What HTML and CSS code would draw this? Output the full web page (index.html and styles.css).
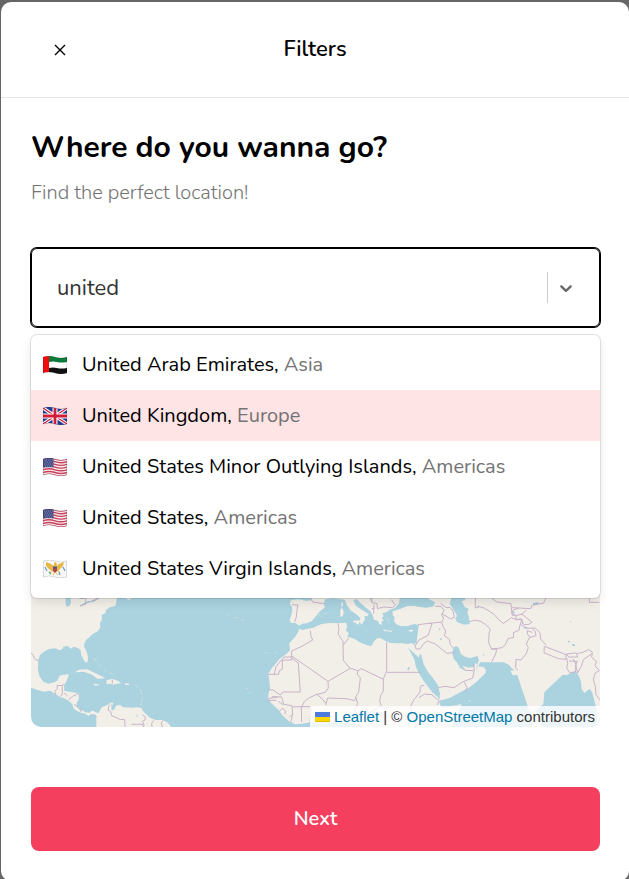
FILE: index.html
```html
<!DOCTYPE html>
<html lang="en">
<head>
<meta charset="utf-8">
<meta name="viewport" content="width=device-width, initial-scale=1">
<title>Filters</title>
<link rel="stylesheet" href="styles.css">
</head>
<body>
<main class="modal" role="dialog" aria-labelledby="modal-title">
  <header class="modal-header">
    <button class="close" type="button" aria-label="Close">
      <svg width="18" height="18" viewBox="0 0 18 18" aria-hidden="true"><path d="M4 4l10 10M14 4L4 14"/></svg>
    </button>
    <h1 class="modal-title" id="modal-title">Filters</h1>
  </header>
  <div class="modal-body">
    <h2 class="heading">Where do you wanna go?</h2>
    <label class="subtitle" for="country">Find the perfect location!</label>
    <div class="select">
      <div class="control">
        <input class="search" id="country" type="text" value="united" role="combobox" aria-expanded="true" aria-controls="countries" autocomplete="off">
        <span class="separator"></span>
        <button class="toggle" type="button" aria-label="Toggle countries">
          <svg width="20" height="20" viewBox="0 0 20 20" aria-hidden="true"><path d="M4.516 7.548c0.436-0.446 1.043-0.481 1.576 0l3.908 3.747 3.908-3.747c0.533-0.481 1.141-0.446 1.574 0 0.436 0.445 0.408 1.197 0 1.615-0.406 0.418-4.695 4.502-4.695 4.502-0.217 0.223-0.502 0.335-0.787 0.335s-0.57-0.112-0.789-0.335c0 0-4.287-4.084-4.695-4.502s-0.436-1.17 0-1.615z"/></svg>
        </button>
      </div>
      <ul class="menu" id="countries" role="listbox">
        <li class="option" role="option">
          <svg class="flag" viewBox="0 0 24 18" aria-hidden="true"><g clip-path="url(#wave)"><path fill="#fff" d="M0 0h24v18H0z"/><path fill="#087a3c" d="M6 0V6Q10 5 14 6T24 6V0z"/><path fill="#111" d="M6 12Q10 11 14 12T24 12V18H6z"/><path fill="#f20d0d" d="M0 0h6v18H0z"/></g><use href="#flag-edge"/></svg>
          <span>United Arab Emirates, <span class="region">Asia</span></span>
        </li>
        <li class="option active" role="option" aria-selected="true">
          <svg class="flag" viewBox="0 0 24 18" aria-hidden="true"><g clip-path="url(#wave)"><path fill="#1d3f91" d="M0 0h24v18H0z"/><path stroke="#fff" stroke-width="3.4" d="M0 1l24 16M24 1L0 17"/><path stroke="#d21c3b" stroke-width="1.3" d="M0 1l24 16M24 1L0 17"/><path stroke="#fff" stroke-width="5" d="M12 0v18M0 9h24"/><path stroke="#d21c3b" stroke-width="2.8" d="M12 0v18M0 9h24"/></g><use href="#flag-edge"/></svg>
          <span>United Kingdom, <span class="region">Europe</span></span>
        </li>
        <li class="option" role="option">
          <svg class="flag" viewBox="0 0 24 18" aria-hidden="true"><use href="#flag-us"/></svg>
          <span>United States Minor Outlying Islands, <span class="region">Americas</span></span>
        </li>
        <li class="option" role="option">
          <svg class="flag" viewBox="0 0 24 18" aria-hidden="true"><use href="#flag-us"/></svg>
          <span>United States, <span class="region">Americas</span></span>
        </li>
        <li class="option" role="option">
          <svg class="flag" viewBox="0 0 24 18" aria-hidden="true"><g clip-path="url(#wave)"><path fill="#f7f7f7" d="M0 0h24v18H0z"/><path fill="#e9b545" d="M3 2l5 2 3 2 0-3 1.500-1L14 4l-.5 2L16 4l5-2-1 4-3 3-2 2-3 2-3-2-3-2-3-3z"/><path stroke="#e9b545" stroke-width="1" d="M9 10l-2 3M15 10l2 3M11 13l-1 2M13 13l2 2"/><path fill="#b04456" d="M10 7.500h4v3L12 13l-2-2.500z"/><path fill="#4c5790" d="M10 6.500h4v2h-4z"/><path stroke="#5a9cc4" stroke-width="1.200" d="M2 7l2 4M20 7l2 4M16 12l1 3"/><path stroke="#67a36c" stroke-width="1.200" d="M6 12l2 2"/></g><use href="#flag-edge"/></svg>
          <span>United States Virgin Islands, <span class="region">Americas</span></span>
        </li>
      </ul>
    </div>
    <div class="map">
      <svg class="tiles" viewBox="33 -513 1707 924" preserveAspectRatio="xMidYMax slice" role="img" aria-label="World map">
        <!-- Americas -->
        <g>
          <path class="land" d="M33-513H290V30L286 48 270 52 258 60 256 70 245 75 246 90 240 98 241 113 233 124 218 132 208 142 198 150 193 160 192 168 200 185 204 200 203 215 197 218 190 208 183 193 182 180 173 174 162 170 152 176 143 168 130 170 128 176 120 181 105 175 88 177 75 183 60 195 55 210 54 240 58 258 70 275 85 281 103 277 113 271 118 258 130 254 147 253 143 265 137 278 132 285 133 303 150 305 175 310 177 325 170 340 170 350 178 359 190 362 195 367 210 368 217 361 227 367 235 370 245 352 260 346 275 337 280 340 276 354 282 361 288 347 300 345 310 352 335 353 352 352 365 354 368 362 378 372 390 383 407 390 427 390 440 396 447 402 453 411H229V378L222 373 212 373 205 378 196 371 184 369 170 362 161 356 157 343 148 334 132 325 118 320 106 312 90 302 73 305 55 301 33 293z"/>
          <path class="land" d="M165 247l12-8 25-1 23 11 14 7 17 9-24 1-16-12-24-9zM260 270l18-3 15 5 11 8-19 2-7 4-5-5-14 1zM315 280l13 1v4h-13zM220 281l15 2 2 3-12 1zM318 24l18 0-10 6z"/>
          <path class="islets" d="M219 206l8 2 2 9M235 224l7 8M252 237l8 8M268 250l12 3M346 286l8 5M360 297l4 10 1 8M367 321l-2 15-3 12M383 328l1 1"/>
          <path class="water" d="M137 20h14l2 18-5 10-8 2-3-8zM274 340l6 8-1 13-5-2zM349 373l5 4-3 5z"/>
          <path class="lake" d="M180 24l12 0M180 48l20-10 12-4M216 36l21-12"/>
          <path class="border" d="M33 189l7 7 3 9 8 6h8M131 281l-4 6-16-1 1 10-8 8 4 11M127 287v25l-6 8M132 309l10 8M146 329l12-10 17-9M162 344l10 4M184 357l-2 9M223 373l6 8M177 24l20 0 1 18-18 6M210 35l28-12M277 269v14M268 344l-4 16 8 5 3 12 14 6 13 6 12-1 1 23M370 411l-1-8H334M367 374l9 7-1 9-8 4 6 12M401 391l-6 9 1 11M430 391l-7 8 5 12"/>
        </g>
        <!-- Europe and Africa -->
        <g transform="translate(570)">
          <path class="land" d="M300-513H570V20L567 40 555 54 540 59 530 66 517 70 521 78 515 85 522 92 514 94 517 105 507 101 503 92 492 89 487 73 478 61 468 53 455 42 440 27 430 31 438 48 460 62 476 72 472 79 463 77 465 88 455 104 449 97 451 84 438 72 423 62 409 43 405 29 370 25 345 28 341 43 345 52 327 67 315 82 305 94 290 100 276 101 268 107 255 98 243 99 239 91 247 63 246 51 240 43 242 31 265 28 290 33 306 30z"/>
          <path class="land" d="M268 116L277 120 310 113 332 103 357 99 386 100 408 98 412 110 407 120 416 130 412 140 430 145 452 158 472 166 485 168 490 157 501 145 513 145 526 153 542 159 570 160 620 160 700 411H457L450 403 427 398 398 397 355 399 302 397 276 401 256 403 239 395 217 376 206 360 184 340 174 324 176 310 180 295 178 270 175 251 185 235 197 221 208 207 229 192 240 181 238 159 252 145 263 129z"/>
          <path class="land" d="M548 64l23-8V108l-13-6-6-10 2-10-6-7zM391 58l6-4 4 11-2 13-8 3zM394 38l4-3 1 13-4 4zM426 93l24-2-4 13zM519 117l10 4 17 1v3l-24-2z"/>
          <path class="islets" d="M52 74l5-1M72 84l13-1M93 88l10 6M163 188l6 1M175 188l4 2M193 190l7-4M104 293l10 5M115 308l8 2M324 75l7-2M341 71l10-2M527 85l10 6M533 98l6 4"/>
          <path class="border" d="M246 44l18 1-3 14-2 22-5 15M303 27l5 9 34 5M301 122l2 17 5 11-29 17-34 16v19M175 253h31l2-11 9-4V210h28V201H222l-24 29-5 22M245 198L354 274M265 219l6 87H218l-7 9-22-15-14-1M246 205l21 16M354 274l1 20-9 13-28 7-23 11-12 10-9 17M354 274l67-39 23 7 10-6 66 32V303l-8 13-3 18 5 13M384 100l3 18-3 14 15 22 1 57 20 24M400 165l16-21M445 241l-4 11 10 12-5 43-8 12-4 13-25-6-56-2-6 22M320 312l18 16 9 12M530 156v87l-10 24M531 247h39M484 25l2 13 15 2 1 16 18-5 28 2 8-8-12-16M486 25l-3 8M492 43l-1 28M485 56l8-1M175 325l27-3M175 331h24M186 320l29 1 6 22 25 4 2 25-6 26M205 334l14 10M208 364l10-9 8 8-1 10M237 382l8-8M248 351l26-1 1 46M274 350l29 0-3 49M438 323l5 18-9 18 14 20 35-13 27-17 25 5M478 24l11 11"/>
        </g>
        <!-- Middle East and Asia -->
        <g transform="translate(1140)">
          <path class="land" d="M0-513H600V411H155L183 345 151 349 128 350 119 342 106 329 95 314 80 297 63 272 53 247 47 225 35 204 25 181 24 173 42 181 50 157 53 130 54 107 42 103 25 108 0 109V56L24 47 45 48 67 52 95 51 104 42 83 31 60 24 0-20z"/>
          <path class="land" d="M0 160L24 162 37 159 43 167 44 178 34 176 27 182 37 205 48 229 54 252 64 275 82 299 97 316 108 331 121 344 129 352 152 351 184 345 155 411H0z"/>
          <path class="water" d="M0 20H74L104 36 101 49 80 53 60 50 44 48 22 47 0 57zM155 20h38l3 10-11 4 9 17 12 5-4 11 5 16 2 19-17 2-21-8-5-10 5-9-10-18-12-17zM0 110L25 108 44 102 56 106 52 132 45 154 43 167 37 159 22 162 0 158z"/>
          <path class="land" d="M23 122l10-3 8 1-7 6z"/>
          <path class="water" d="M24 173l12 22 7 13 5 23 11 23 15 23 23 30 16 14 5 10 2-20-5-23-16-24-15-18-13-23-7-28-5-4-2 12zM117 332l32-8 32-17 28-15 20-16 27-26 2-10-8-10-15 0 5-13 40 0 30 0 17 7 8 11 9 5-13 2 7 14 14-1 10 31 13 38 11 33 11 16V411H155l30-69-36 7-26 1zM160 172l9-3 7 4 7 20 14 8 14 3 21-6 5 12-5 14-1 17-18 4-20-4-13-7-8-16-10-10-5-16z"/>
          <path class="land" d="M189 227l16 6 17-2 5-13 4 5-2 13 14 5-11 14-30-8-13-14z"/>
          <path class="water" d="M405 364l10-10 15-11 3-36 14-14 25-23 16-16 11 2 28-14 11 19 5 15 2 22 8 11 16-13 8 12 5 20 8 30V411H425z"/>
          <path class="land" d="M401 360l12 10 10 41h-21zM205 331l7 1-2 3z"/>
          <path class="lake" d="M234 47l3 3M336 64l7 6M399 42l16-3M372 112l9 2M504 154l5 2M517 163l7 4M511 94l1 1M250 194l1 2M118 116l2 3M121 146l4 2M23 240l5-8"/>
          <path class="border" d="M54 104l33-4 38-4 4 14 8 13-4 14 15 11 3 16 8 9M89 100l7 1-12 35-27 14-11 16 2 11 12 0 10-15 12-9 24 9 35 28 24-3M126 96l5-12-6-8 7-15-9-12-18 0M122 40l16 13 12-1 6 8M124 71l14 7 13 9 12-5-5-24M208 95l15-4 17 2 16 10 15 14M271 117l-4 15-1 26 8 18 16 2-3 14-12 23M226 24v30l13-4 15 5 28 18 15 17 13 10M310 100l15-10 9-7 15 6 17-1-6 17-3 16-17 7 1 14-17 4-8 18-10 9-33 5M275 25l16 11 42 5 1 12 24 1 34 2 4-10 35-7 6-15M358 54l-18 6-6 9 12 8 19-4 14-12M334 54l3 22 10-1 2 15 13-4 9 18 16-1 9-7-16-12-16-13M365 88l4 14M361 103l19 12 25-1 15 14 2 19 17 19M397 117l9 7 2 13-20 6-9 19 6 11-7 19-15 18-15-2-1 26 7 7M397 127l-16-5 2 11 7 9M433 169l65 25v14l-23-2-43-18zM499 192l7 9h27l-4-12-15 1zM532 190l14-2 20-9 11 7-2 16 14 12-4 13 13 15-13 7-5 20 6 20 2 25 13 17M500 204l3 16-3 14 9 14 17-2 2-22-8-17M507 213l25 1-5 13 6 22 12-22 5-18 26-18M115 293l20-4 27 4 25-17 15-6 16-6 5-24-3-18M193 277l8 16-5 13M190 232l5 9 25 1M0 247h62M63 288l10-2M61 289l-1 17-18 23-10 19 4 29M57 323l17-11 21 2 21 17M117 333l-5 12M568 25v12h30"/>
        </g>
      </svg>
      <div class="attribution">
        <a href="#leaflet"><svg class="ua" width="15" height="10" viewBox="0 0 15 10" aria-hidden="true"><path fill="#4c7be1" d="M0 0h15v5H0z"/><path fill="#ffd500" d="M0 5h15v4H0z"/><path fill="#e0bc00" d="M0 9h15v1H0z"/></svg> Leaflet</a> | © <a href="#osm">OpenStreetMap</a> contributors
      </div>
    </div>
    <button class="next" type="button">Next</button>
  </div>
</main>
<svg class="defs" width="0" height="0" aria-hidden="true">
  <defs>
    <clipPath id="wave"><path d="M0 1Q6-1 12 1T24 1V17Q18 19 12 17T0 17z"/></clipPath>
    <path id="flag-edge" fill="none" stroke="#000" stroke-opacity=".2" stroke-width=".7" d="M.3 1Q6-1 12 1T23.700 1V17Q18 19 12 17T.3 17z"/>
    <g id="flag-us"><g clip-path="url(#wave)"><path fill="#f8eff1" d="M0 0h24v18H0z"/><path fill="none" stroke="#c8405b" stroke-width="1.350" d="M0 1Q6-1 12 1T24 1M0 3.700Q6 1.700 12 3.700T24 3.700M0 6.400Q6 4.400 12 6.400T24 6.400M0 9.100Q6 7.100 12 9.100T24 9.100M0 11.800Q6 9.800 12 11.800T24 11.800M0 14.500Q6 12.500 12 14.500T24 14.500M0 17.200Q6 15.200 12 17.200T24 17.200"/><path fill="#434f86" d="M0 0h10.500v9.300H0z"/><path stroke="#d5d9e8" stroke-width=".6" stroke-dasharray=".7 1.300" d="M1 2h9M2 4h8M1 6h9M2 8h8"/></g><use href="#flag-edge"/></g>
  </defs>
</svg>
</body>
</html>
```
FILE: styles.css
```css
* { box-sizing: border-box; }
body {
  margin: 0;
  padding: 2px 0 0 1px;
  background: #666;
  color: #000;
  font-family: Nunito, Lato, sans-serif;
  font-size: 20px;
  line-height: 30px;
  overflow: hidden;
}
button, input { font: inherit; }
button { border: 0; cursor: pointer; }
h1, h2, ul { margin: 0; padding: 0; }
.modal { background: #fff; border-radius: 10px; }
.modal-header {
  display: grid;
  grid-template-columns: 58px 1fr 58px;
  align-items: center;
  padding: 30px;
  border-bottom: 1px solid #e5e5e5;
}
.close {
  display: flex;
  justify-content: center;
  padding: 8px;
  background: none;
}
.close path { fill: none; stroke: #000; stroke-width: 1.4; }
.modal-title {
  text-align: center;
  font-size: 22px;
  line-height: 35px;
  font-weight: 600;
}
.modal-body { padding: 30px 29px 30px 30px; }
.heading { font-size: 30px; line-height: 40px; font-weight: 700; }
.subtitle {
  display: block;
  margin-top: 10px;
  color: #737373;
  font-weight: 300;
}
.select { position: relative; margin-top: 40px; }
.control {
  display: flex;
  align-items: center;
  height: 79px;
  padding: 0 15px 0 25px;
  border: 1px solid #000;
  border-radius: 6px;
  box-shadow: 0 0 0 1px #000;
}
.search {
  flex: 1;
  min-width: 0;
  padding: 0;
  border: 0;
  outline: 0;
  background: none;
  color: #333;
  font-size: 22px;
}
.separator { width: 1px; height: 31px; background: #ccc; }
.toggle { display: flex; padding: 8px; background: none; }
.toggle path { fill: #666; }
.menu {
  position: absolute;
  z-index: 2;
  top: 100%;
  left: 0;
  right: 0;
  margin-top: 8px;
  padding: 4px 0;
  list-style: none;
  border-radius: 6px;
  background: #fff;
  box-shadow: 0 0 0 1px rgba(0, 0, 0, .1), 0 4px 11px rgba(0, 0, 0, .1);
}
.option {
  display: flex;
  align-items: center;
  gap: 15px;
  height: 51px;
  padding: 0 12px;
  white-space: nowrap;
}
.active { background: #ffe4e6; }
.flag { width: 24px; height: 18px; }
.region { color: #737373; }
.map {
  position: relative;
  height: 308px;
  margin-top: 92px;
  overflow: hidden;
  border-radius: 10px;
  background: #aad3df;
}
.tiles { display: block; width: 100%; height: 100%; }
.land { fill: #f2efe9; }
.water { fill: #aad3df; }
.islets { fill: none; stroke: #d9e3df; stroke-width: 2; }
.lake { fill: none; stroke: #96c5dc; stroke-width: 4; }
.border { fill: none; stroke: #c9b3c9; stroke-width: 3; stroke-linejoin: round; }
.attribution {
  position: absolute;
  right: 0;
  bottom: 0;
  padding: 0 5px;
  background: rgba(255, 255, 255, .8);
  color: #333;
  font: 15px/21px "Liberation Sans", Arial, sans-serif;
  white-space: nowrap;
}
.attribution a { color: #0078a8; text-decoration: none; }
.next {
  display: block;
  width: 100%;
  margin-top: 60px;
  padding: 17px;
  border-radius: 8px;
  background: #f43f5e;
  color: #fff;
  font-weight: 600;
}
.defs { position: absolute; }
```
